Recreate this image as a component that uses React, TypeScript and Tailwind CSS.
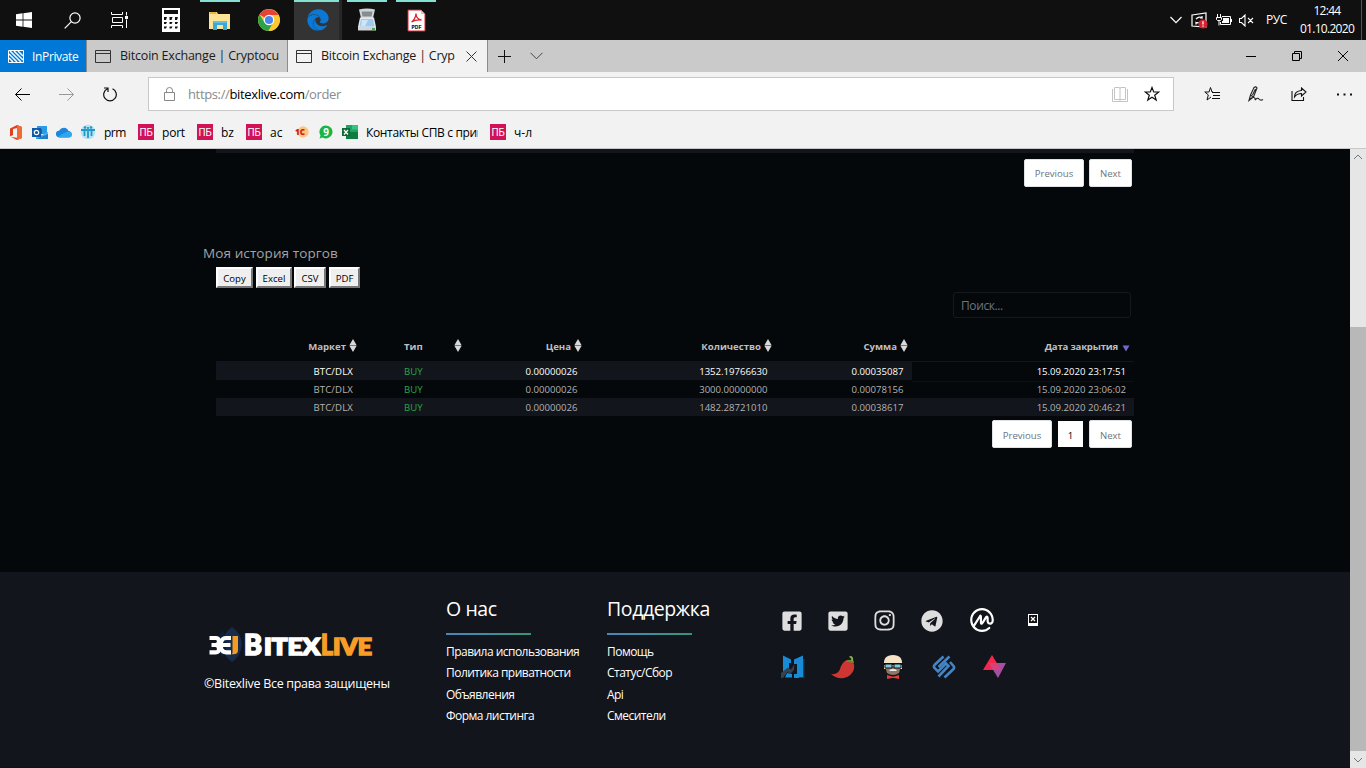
import React from 'react';
import { FaEdge, FaFacebookSquare, FaInstagram, FaTelegram, FaTwitterSquare } from 'react-icons/fa';
import { SiCoinmarketcap } from 'react-icons/si';

const ui = "font-['Open_Sans','Noto_Sans',sans-serif]";

function WindowsIcon() {
  return (
    <svg width="16" height="16" viewBox="0 0 16 16" fill="#fff">
      <path d="M0 2.2 6.6 1.3V7.6H0zM7.4 1.2 16 0V7.6H7.4zM0 8.4H6.6V14.7L0 13.8zM7.4 8.4H16V16L7.4 14.8z" />
    </svg>
  );
}

function SearchIcon() {
  return (
    <svg width="17" height="17" viewBox="0 0 17 17" fill="none" stroke="#fff" strokeWidth="1.2">
      <circle cx="11" cy="6" r="5.1" />
      <path d="M7.4 9.6 .7 16.3" />
    </svg>
  );
}

function TaskViewIcon() {
  return (
    <svg width="18" height="16" viewBox="0 0 18 16" fill="none" stroke="#fff" strokeWidth="1">
      <path d="M.5 0V2.5H11.5V0M.5 16V13.5H11.5V16M1.5 5.5H11.5V10.5H1.5zM15.5 0V3.5M15.5 7.5V16" />
      <path d="M14 4h3v3h-3z" fill="#fff" stroke="none" />
    </svg>
  );
}

function CalcIcon() {
  return (
    <svg width="18" height="24" viewBox="0 0 18 24">
      <path d="M0 0h18v24H0z" fill="#fff" />
      <path
        d="M2 2h14v4H2zM2 9h3l-1 3H2zM7.5 9h3l-1 3h-2zM13 9h3l-1 3h-2zM2 14h3l-1 2H2zM7.5 14h3l-1 2h-2zM13 14h3l-1 2h-2zM2 18.5h3l-1 2H2zM7.5 18.5h3l-1 2h-2zM13 18.5h3l-1 2h-2z"
        fill="#111"
      />
    </svg>
  );
}

function FolderIcon() {
  return (
    <svg width="22" height="19" viewBox="0 0 22 19">
      <path d="M0 1h8l1 2h12v14H0z" fill="#f5cf62" />
      <path d="M1 1h6v2H1z" fill="#e9b53c" />
      <path d="M0 3h21v15H0z" fill="#fde395" />
      <path d="M4 19V11q0-1 1-1h12q1 0 1 1v8h-4v-5H8v5z" fill="#3ba7d6" />
      <path d="M5 10h12v2H5z" fill="#62c0e6" />
    </svg>
  );
}

function ChromeIcon() {
  return (
    <svg width="22" height="22" viewBox="0 0 22 22">
      <circle cx="11" cy="11" r="11" fill="#fcc934" />
      <path d="M11 11 1.5 5.5A11 11 0 0 1 20.5 6H11z" fill="#e54335" />
      <path d="M1.5 5.5A11 11 0 0 0 10.5 22L15.3 13.5 11 11 6.5 13.4z" fill="#2ba24c" />
      <path d="M11 6h9.5A11 11 0 0 1 10.5 22l4.8-8.5z" fill="#fcc934" />
      <circle cx="11" cy="11" r="5.2" fill="#fff" />
      <circle cx="11" cy="11" r="4.1" fill="#4a84ee" />
    </svg>
  );
}

function ScannerIcon() {
  return (
    <svg width="20" height="24" viewBox="0 0 20 24">
      <path d="M2 1.500q8-2 16 0l-2 8.500H4z" fill="#d2d5d7" />
      <path d="M4.500 3.500h11L14.500 8.500h-9z" fill="#858d91" />
      <path d="M3 9.500h14l2 9.500H1z" fill="#e2e9ee" />
      <path d="M4 11h12l1.500 7.500h-15z" fill="#9fcaee" />
      <path d="M5 12h6l-3 6H4z" fill="#cfe5f7" />
      <path d="M1 19h18v3.500H1z" fill="#d3d6d8" />
      <path d="M15 20h3v2h-3z" fill="#3fae49" />
    </svg>
  );
}

function PdfIcon() {
  return (
    <svg width="19" height="23" viewBox="0 0 19 23">
      <path d="M1 1h13l4 4v17H1z" fill="#fff" stroke="#d8232a" />
      <path d="M14 1v4h4z" fill="#f6b7b7" />
      <path d="M4.500 13c2-1 4.500-5 4.500-8.500 0 4 2 6 5.500 6.500C10.500 10.500 7 11.500 4.500 13z" fill="none" stroke="#d8232a" strokeWidth="1.300" />
      <text x="9.500" y="19.500" fontSize="5" fontWeight="800" textAnchor="middle" fill="#222" fontFamily="Inter">PDF</text>
    </svg>
  );
}

function Tray() {
  return (
    <>
      <svg className="mr-[9px]" width="12" height="8" viewBox="0 0 12 8" fill="none" stroke="#fff" strokeWidth="1.2">
        <path d="M.5 1 6 6.700 11.500 1" />
      </svg>
      <svg className="mr-[8px]" width="17" height="17" viewBox="0 0 17 17" fill="none" stroke="#fff" strokeWidth="1.200">
        <path d="M1 3 15 1V15L1 14z" />
        <path d="M5 7q3-3 6-1v-2M11 6H9M10 9q-2 3-5 1.500V12.500M5 10.500h2" />
        <circle cx="12" cy="12" r="4.600" fill="#d5222e" stroke="none" />
        <path d="M12 9.300v3.200M12 13.600v1.200" strokeWidth="1.300" />
      </svg>
      <svg className="mr-[7px]" width="16" height="13" viewBox="0 0 16 13" fill="none" stroke="#fff">
        <path d="M1.500 0v3M4.500 0v3M.5 3.500h5v2l-1 1h-3l-1-1zM3 7v4.500" />
        <path d="M6 2.500h8.500v8H4.500V8" />
        <path d="M7 4h6v5H6V7h1zM14.500 5h1.500v3h-1.500z" fill="#fff" stroke="none" />
      </svg>
      <svg className="mr-[12px]" width="15" height="13" viewBox="0 0 15 13" fill="none" stroke="#fff" strokeWidth="1.100">
        <path d="M.5 4.500h2L6 1v11L2.500 8.500h-2zM9 4l5 5M14 4 9 9" />
      </svg>
    </>
  );
}

function Cell({ children, open = false, active = false }: { children: React.ReactNode; open?: boolean; active?: boolean }) {
  return (
    <div className={'mr-px flex h-10 w-12 flex-col items-center ' + (active ? 'border-r-[3px] border-r-[#272727] bg-[#333]' : '')}>
      <div className={'h-[2px] shrink-0 ' + (open ? (active ? 'w-full bg-[#85e0d2]' : 'w-10 bg-[#85e0d2]') : 'w-10')} />
      <div className={'flex h-9 items-center justify-center ' + (active ? 'pl-[3px]' : '')}>{children}</div>
    </div>
  );
}

function Taskbar() {
  return (
    <header className="flex h-10 shrink-0 items-center bg-[#101010]">
      <div className="flex w-12 justify-center"><WindowsIcon /></div>
      <div className="flex w-12 justify-center"><SearchIcon /></div>
      <div className="mr-[3px] flex w-12 justify-center"><TaskViewIcon /></div>
      <Cell><CalcIcon /></Cell>
      <Cell open><FolderIcon /></Cell>
      <Cell><ChromeIcon /></Cell>
      <Cell open active><FaEdge size={22} color="#0c78d4" /></Cell>
      <Cell open><ScannerIcon /></Cell>
      <Cell open><PdfIcon /></Cell>
      <div className="ml-auto flex items-center">
        <Tray />
        <span className="w-[22px] text-[12px] tracking-[-0.4px] text-white">РУС</span>
      </div>
      <div className="ml-[6px] flex w-[66px] flex-col items-center text-[12px] leading-[18px] text-white">
        <span className="tracking-[-0.7px]">12:44</span>
        <span className="tracking-[-0.7px]">01.10.2020</span>
      </div>
      <div className="ml-px h-10 w-[5px] border-l border-[#555]" />
    </header>
  );
}

function PageIcon() {
  return (
    <svg className="shrink-0" width="16" height="13" viewBox="0 0 16 13" fill="none" stroke="#333">
      <path d="M.5.5h15v12H.5zM.5 3.500h15" />
    </svg>
  );
}

function TabStrip() {
  return (
    <div className="flex h-8 shrink-0 items-center bg-[#cacaca] text-[12.500px] text-[#1a1a1a]">
      <div className="flex h-8 w-[86px] items-center bg-[#0078d7] pl-2 text-[12px] text-white">
        <svg width="16" height="13" viewBox="0 0 16 13" fill="none" stroke="#fff">
          <path d="M.5.5h15v12H.5z" />
          <path d="M1 4l8 8M1 8l4 4M2 1l11 11M6 1l9 9M10 1l5 5" strokeWidth="1.500" />
        </svg>
        <span className="mt-[2px] ml-2 tracking-[-0.35px]">InPrivate</span>
      </div>
      <div className="flex h-8 w-[202px] items-center border-x border-[#8b8b8b] pl-2">
        <PageIcon />
        <span className="ml-[9px] w-[162px] overflow-hidden whitespace-nowrap tracking-[-0.21px]">Bitcoin Exchange | Cryptocu</span>
      </div>
      <div className="flex h-8 w-[200px] items-center border-r border-[#8b8b8b] bg-[#f2f2f2] pl-2">
        <PageIcon />
        <span className="ml-[9px] w-[145px] overflow-hidden whitespace-nowrap tracking-[-0.23px]">Bitcoin Exchange | Cryp</span>
        <svg width="11" height="11" viewBox="0 0 11 11" stroke="#333">
          <path d="M.5.5l10 10M10.500.5l-10 10" />
        </svg>
      </div>
      <svg className="ml-[10px]" width="13" height="13" viewBox="0 0 13 13" stroke="#111">
        <path d="M6.500 0v13M0 6.500h13" />
      </svg>
      <svg className="ml-[19px]" width="13" height="8" viewBox="0 0 13 8" fill="none" stroke="#444">
        <path d="M.5.8l6 6 6-6" />
      </svg>
      <svg className="ml-auto" width="10" height="10" viewBox="0 0 10 10" stroke="#000"><path d="M0 5.500h10" /></svg>
      <svg className="ml-9" width="10" height="10" viewBox="0 0 10 10" fill="none" stroke="#000">
        <path d="M.5 2.500h7v7h-7zM2.500 2.500v-2h7v7h-2" />
      </svg>
      <svg className="mr-[18px] ml-9" width="10" height="10" viewBox="0 0 10 10" stroke="#000"><path d="M0 0l10 10M10 0 0 10" /></svg>
    </div>
  );
}

function AddressBar() {
  return (
    <div className="flex h-11 shrink-0 items-center bg-[#f2f2f2]">
      <svg className="ml-[15px]" width="15" height="13" viewBox="0 0 15 13" fill="none" stroke="#000"><path d="M15 6.500H.7M6.500.5l-6 6 6 6" /></svg>
      <svg className="ml-[29px]" width="15" height="13" viewBox="0 0 15 13" fill="none" stroke="#999"><path d="M0 6.500h14.300M8.500.5l6 6-6 6" /></svg>
      <svg className="ml-[29px]" width="14" height="15" viewBox="0 0 14 15" fill="none" stroke="#111" strokeWidth="1.200">
        <path d="M4.500 1.800A6.300 6.300 0 1 0 9.500 1.800M1 1h4v4" />
      </svg>
      <div className="ml-[31px] flex h-[34px] w-[1026px] items-center border border-[#c8c8c8] bg-white">
        <svg className="ml-[15px]" width="11" height="14" viewBox="0 0 11 14" fill="none" stroke="#888">
          <path d="M.5 5.500h10v8H.5zM2.500 5.500V3.300a3 2.800 0 0 1 6 0v2.200" />
        </svg>
        <span className="mt-px ml-[13px] text-[13px] tracking-[-0.36px] whitespace-nowrap text-[#8a8a8a]">
          https://<span className="text-black">bitexlive.com</span>/order
        </span>
        <svg className="ml-auto" width="16" height="15" viewBox="0 0 16 15" fill="none" stroke="#c4c4c4">
          <path d="M2.500.5h5l.5 1 .5-1h5v12h-5l-.5 1-.5-1h-5zM8 1v12M.5 2v12.500h15V2" />
        </svg>
        <svg className="mr-[13px] ml-4" width="16" height="16" viewBox="0 0 16 16" fill="none" stroke="#111" strokeWidth="1.200">
          <path d="M8 1.500 9.700 6h5L10.700 9.200 12.200 14 8 11.200 3.800 14 5.300 9.200 1.300 6h5z" />
        </svg>
      </div>
      <svg className="ml-[30px]" width="17" height="16" viewBox="0 0 17 16" fill="none" stroke="#111">
        <path d="M9 6H8L6.500 1.500 5 6H.8L4.300 8.900 3 14l4-3M8 6.500h8M9 9.500h7M8 12.500h8" />
      </svg>
      <svg className="ml-[27px]" width="16" height="16" viewBox="0 0 16 16" fill="none" stroke="#222" strokeWidth="1.100">
        <path d="M1 14.500 2.500 9 6 1.500q2-1.500 3 .5L5.500 11zM2.500 9 5.500 11M4.500 9 7.500 3M1 14.500C5 9 8 12 7 14q3-3 4-1 1.500 2 4 .5" />
      </svg>
      <svg className="ml-[27px]" width="17" height="15" viewBox="0 0 17 15" fill="none" stroke="#111" strokeWidth="1.100">
        <path d="M1 4v9.500h11.500V10M3.500 10q0-6 7-6.500V1l4.500 4-4.500 4V6.500Q6 6.500 3.500 10z" />
      </svg>
      <svg className="ml-[29px]" width="15" height="3" viewBox="0 0 15 3" fill="#111"><path d="M0 .5h2v2H0zM6.500.5h2v2h-2zM13 .5h2v2h-2z" /></svg>
    </div>
  );
}

function Pb({ label, className }: { label: string; className: string }) {
  return (
    <div className={'flex items-center ' + className}>
      <span className="flex size-4 items-center justify-center bg-[#d01257] pt-px font-['Roboto',sans-serif] text-[10px] leading-none tracking-[-0.2px] text-white">ПБ</span>
      <span className="mt-[2px] ml-2">{label}</span>
    </div>
  );
}

function Favorites() {
  return (
    <div className="flex h-[33px] shrink-0 items-center border-b border-[#c8c8c8] bg-[#f2f2f2] text-[12px] whitespace-nowrap text-black">
      <svg className="ml-[9px]" width="13" height="15" viewBox="0 0 13 15">
        <path d="M1 3.500 8 0l5 2v11l-5 2-6-3 6 .7V3L4 4v6l-3 1.500z" fill="#e0401c" />
        <path d="M8 0l5 2v11l-5 2z" fill="#f06a35" />
      </svg>
      <svg className="ml-[10px]" width="16" height="15" viewBox="0 0 16 15">
        <path d="M5 1h10v8H5z" fill="#2a9be6" />
        <path d="M5 4h5v5H5z" fill="#1066b5" />
        <path d="M4 7l6 3 6-3v7H4z" fill="#49b6f2" />
        <path d="M4 14l12-5v5z" fill="#1b7fd0" />
        <path d="M0 3h9v9H0z" fill="#0f5ba7" />
        <circle cx="4.500" cy="7.500" r="2.200" fill="none" stroke="#fff" strokeWidth="1.200" />
      </svg>
      <svg className="ml-[8px]" width="16" height="11" viewBox="0 0 16 11">
        <path d="M3.500 10.500a3.500 3.500 0 0 1-.2-7A5 5 0 0 1 12.500 4a3.300 3.300 0 0 1 .2 6.500z" fill="#1a86dc" />
        <path d="M2 10q6-5 11-5.500a3 3 0 0 1 0 6H3.500z" fill="#31a6ef" />
      </svg>
      <svg className="ml-2" width="16" height="16" viewBox="0 0 16 16">
        <circle cx="8" cy="8" r="7.300" fill="#b4e3f3" />
        <path d="M1 6h6M9 6h6M8 3v11M4.500 7v5M11.500 7v5" stroke="#2399c8" strokeWidth="1.800" />
        <circle cx="5" cy="3.500" r="1.300" fill="#2399c8" />
        <circle cx="11" cy="3.500" r="1.300" fill="#2399c8" />
      </svg>
      <span className="mt-[2px] ml-2 w-[24px] tracking-[-0.5px]">prm</span>
      <Pb label="port" className="ml-[10px] w-[49px] tracking-[-0.2px]" />
      <Pb label="bz" className="ml-[10px] w-[39px]" />
      <Pb label="ac" className="ml-[10px] w-[39px]" />
      <svg className="ml-[10px]" width="14" height="14" viewBox="0 0 14 14">
        <circle cx="8" cy="7" r="5.700" fill="#fbc77e" />
        <text x="0" y="10" fontSize="8" fontWeight="800" fill="#cb2019" fontFamily="Open Sans">1С</text>
      </svg>
      <svg className="ml-[10px]" width="14" height="14" viewBox="0 0 14 14">
        <path d="M7 .5a6.500 6.500 0 1 1-3.500 12L.5 13.500 1.500 10.500A6.500 6.500 0 0 1 7 .5z" fill="#17b544" />
        <text x="7" y="10.500" fontSize="10" fontWeight="700" textAnchor="middle" fill="#fff" fontFamily="Open Sans">9</text>
      </svg>
      <svg className="ml-[9px]" width="16" height="14" viewBox="0 0 16 14">
        <path d="M4 0h12v14H4z" fill="#21a366" />
        <path d="M10 0h6v4.500h-6z" fill="#33c481" />
        <path d="M4 7h12v7H4z" fill="#107c41" />
        <path d="M0 3h8v8H0z" fill="#0e6b37" />
        <path d="M2 5l4 4.500M6 5 2 9.500" stroke="#fff" strokeWidth="1.300" />
      </svg>
      <span className="mt-[2px] ml-2 w-[112px] overflow-hidden tracking-[-0.35px]">Контакты СПВ с прив</span>
      <Pb label="ч-л" className="ml-[12px]" />
    </div>
  );
}

function Sorter() {
  return (
    <svg width="8" height="13" viewBox="0 0 8 13" fill="#d8d8d8">
      <path d="M4 0 7.500 6H.5zM4 13 .5 7h7z" />
      <path d="M.5 6h7v1h-7z" fill="#777" />
    </svg>
  );
}

const cols = 'grid grid-cols-[145px_105px_120px_190px_136px_222px]';

const trades = [
  ['0.00000026', '1352.19766630', '0.00035087', '15.09.2020 23:17:51'],
  ['0.00000026', '3000.00000000', '0.00078156', '15.09.2020 23:06:02'],
  ['0.00000026', '1482.28721010', '0.00038617', '15.09.2020 20:46:21'],
];

function Head({ label }: { label: string }) {
  return (
    <div className="flex items-center justify-end gap-[3px] pr-1">
      <span>{label}</span>
      <span className="-mt-[3px]"><Sorter /></span>
    </div>
  );
}

function Trades() {
  return (
    <div className="ml-[216px] w-[918px] text-[9.600px]">
      <div className={cols + ' h-[32px] border-b border-[#12151a] pt-[3px] font-bold text-[#bfbfbf]'}>
        <Head label="Маркет" />
        <div className="flex items-center justify-between pr-1 pl-[43px]">
          <span>Тип</span>
          <span className="-mt-[3px]"><Sorter /></span>
        </div>
        <Head label="Цена" />
        <Head label="Количество" />
        <Head label="Сумма" />
        <div className="flex items-center justify-end gap-1 pr-[4px]">
          <span className="tracking-[-0.2px]">Дата закрытия</span>
          <svg className="mt-[2px]" width="8" height="7" viewBox="0 0 8 6" fill="#7468c9"><path d="M.5 0h7L4 6z" /></svg>
        </div>
      </div>
      {trades.map((row, i) => (
        <div
          key={row[1]}
          className={cols + ' h-[18px] text-right leading-[19px] ' + (i === 0 ? 'text-white' : 'text-[#b2b2b2]') + (i === 1 ? '' : ' bg-[#12151b]')}
        >
          <span className="pr-2 tracking-[0.15px]">BTC/DLX</span>
          <span className="pl-[43px] text-left text-[#28a745]">BUY</span>
          <span className="pr-[8.500px]">{row[0]}</span>
          <span className="pr-[8.500px]">{row[1]}</span>
          <span className="pr-[8.500px]">{row[2]}</span>
          <span className={'pr-2 ' + (i === 0 ? 'border-b border-[#0c1014] bg-[#04080b]' : '')}>{row[3]}</span>
        </div>
      ))}
    </div>
  );
}

function PageButton({ label, className }: { label: string; className: string }) {
  return (
    <button className={'h-7 rounded-[2px] border border-[#dee2e6] bg-white text-[9.600px] text-[#6c757d] ' + className}>{label}</button>
  );
}

function ExportButton({ label, className }: { label: string; className: string }) {
  return (
    <button
      className={'h-[21px] border-2 border-t-white border-r-[#777] border-b-[#777] border-l-white bg-[#efefef] pt-[2px] text-[9.600px] leading-[15px] text-black ' + className}
    >
      {label}
    </button>
  );
}

function LinkColumn({ title, links, className }: { title: string; links: string[]; className: string }) {
  return (
    <div className={className}>
      <h3 className="mt-[23px] h-[29px] text-[19.500px] leading-[27px] tracking-[-0.4px] whitespace-nowrap">{title}</h3>
      <div className="mt-[9px] mb-[6px] h-[2px] w-[85px] bg-linear-to-r from-[#4a86bd] to-[#369477]" />
      <ul className="text-[12px] leading-[21.400px] tracking-[-0.53px] whitespace-nowrap">
        {links.map((l) => (
          <li key={l}>{l}</li>
        ))}
      </ul>
    </div>
  );
}

function Logo() {
  return (
    <svg width="166" height="36" viewBox="0 0 166 36">
      <path d="M23 0q9 6 10 17-1 12-10 18-9-6-10-18Q14 6 23 0z" fill="#192b4b" />
      <path d="M14 3q-12 13 0 28 7-14 0-28z" fill="#0d1e3a" />
      <g fill="none" stroke="#fff" strokeWidth="4.200">
        <path d="M.5 11h6q3.500 0 3.500 3.500T6.500 18H2.500M6.500 18q3.500 0 3.500 3.700T6.500 25.300H.5" />
        <path d="M22 11h-4.500Q13 11 12 15v6q1 4.300 5.500 4.300H22M10 18h11.500" />
      </g>
      <path d="M23.500 9h5.500v14q0 4.300-4.500 4.300h-2q1.500-1 1-4z" fill="#f49b23" />
      <g fontFamily="Lato, Inter, sans-serif" fontWeight="900" strokeWidth="1.700">
        <text x="35" y="28" fontSize="28" fill="#fff" stroke="#fff" textLength="18" lengthAdjust="spacingAndGlyphs">B</text>
        <text x="55" y="28" fontSize="23.500" fill="#fff" stroke="#fff" textLength="56" lengthAdjust="spacingAndGlyphs">ITEX</text>
        <text x="112" y="28" fontSize="28" fill="#f99d27" stroke="#f99d27" textLength="12" lengthAdjust="spacingAndGlyphs">L</text>
        <text x="124" y="28" fontSize="23.500" fill="#f99d27" stroke="#f99d27" textLength="39" lengthAdjust="spacingAndGlyphs">IVE</text>
      </g>
    </svg>
  );
}

function Partners() {
  return (
    <div className="mt-[22px] flex h-6 items-center">
      <svg width="24" height="24" viewBox="0 0 24 24">
        <path d="M2 .5 10 4.500V8H8v7l-6 4zM13 4.500 22 .5V23h-9v-4h3V9h-3zM6 18l5 1v3.500H4z" fill="#168bd6" />
        <path d="M0 23V18L7 12.500l3 2L13.500 9l-.5 6-4 4-2.500-2L2 23z" fill="#34424f" />
        <path d="M22 4h1.500v19H18v-1h4z" fill="#26384b" />
      </svg>
      <svg className="ml-[26px]" width="24" height="24" viewBox="0 0 24 24">
        <path d="M20 5q4 3 3 9-2 7-10 9Q5 24 0 19q7 1 9-5 2-7 7-9z" fill="#ce3731" />
        <path d="M15 7q1-3 4-2 4-1 4 3-2-1-3 0-2-2-5-1z" fill="#648b35" />
        <path d="M20 6q1-3-2-4l1-1q4 0 3 5z" fill="#86ad48" />
      </svg>
      <svg className="ml-[26px]" width="24" height="24" viewBox="0 0 24 24">
        <path d="M3 10Q2 0 12 0t9 10v4H3z" fill="#f5e2c7" />
        <path d="M4 11h16l-2 7q-6 4-12 0z" fill="#8c7666" />
        <path d="M2 8h20v2H2z" fill="#111" />
        <path d="M4 9h7v4H4zM13 9h7v4h-7z" fill="#78cbe0" stroke="#111" strokeWidth="1" />
        <path d="M8 15q4-2 8 0l-1 1H9z" fill="#eee" />
        <path d="M6 20l5 1.500h2l5-1.500v4l-5-1h-2l-5 1z" fill="#e33b37" />
      </svg>
      <svg className="ml-[27px]" width="24" height="24" viewBox="0 0 24 24" fill="none" stroke="#4384c4" strokeWidth="2.600">
        <path d="M11.500 1.500 2.500 10Q1.300 11.500 2.500 13L6 16.500 14 8.500 16.500 11 6.500 21.500M17.500 1.500 6.500 12M12.500 22.500 21.500 14Q22.700 12.500 21.500 11L18 7" />
      </svg>
      <svg className="ml-[27px]" width="24" height="24" viewBox="0 0 24 24">
        <path d="M9 0l9 15L0 15z" fill="#f5274f" />
        <path d="M6 8h17l-8 15z" fill="#a44fa1" />
        <path d="M6 8h8l4 7h-8z" fill="#d74378" />
      </svg>
    </div>
  );
}

function Footer() {
  return (
    <footer className="flex h-[196px] shrink-0 border-b border-[#190a20] bg-[#12151b] pl-[204px] text-white">
      <div className="w-[242px] pt-[55px]">
        <div className="ml-[5px]"><Logo /></div>
        <p className="mt-[9px] text-[12.500px] leading-[24px] tracking-[-0.3px] whitespace-nowrap">©Bitexlive Все права защищены</p>
      </div>
      <LinkColumn className="w-[161px]" title="О нас" links={['Правила использования', 'Политика приватности', 'Объявления', 'Форма листинга']} />
      <LinkColumn className="w-[174px]" title="Поддержка" links={['Помощь', 'Статус/Сбор', 'Api', 'Смесители']} />
      <div className="pt-9">
        <div className="flex h-[25px] items-center text-[#dedede]">
          <FaFacebookSquare size={22} />
          <FaTwitterSquare size={22} className="ml-6" />
          <FaInstagram size={23} className="ml-6" />
          <FaTelegram size={22} className="ml-[25px]" />
          <SiCoinmarketcap size={24} color="#fff" className="-mt-[2px] ml-[27px]" />
          <svg className="-mt-[2px] ml-[34px]" width="10" height="12" viewBox="0 0 10 12">
            <path d="M0 0h10v12H0z" fill="#fff" />
            <path d="M1 1h8v8H1z" fill="#111" />
            <path d="M3 3l4 4M7 3 3 7" stroke="#fff" strokeWidth="1.200" />
          </svg>
        </div>
        <Partners />
      </div>
    </footer>
  );
}

function Scrollbar() {
  return (
    <div className="flex w-4 flex-col items-center bg-[#e6e6e6]">
      <div className="flex h-[178px] pt-[5px]">
        <svg width="8" height="6" viewBox="0 0 8 6" fill="none" stroke="#777"><path d="M0 5l4-4 4 4" /></svg>
      </div>
      <div className="h-[424px] w-4 bg-[#b8b8b8]" />
      <svg className="mt-[7px]" width="8" height="6" viewBox="0 0 8 6" fill="none" stroke="#777"><path d="M0 0l4 4 4-4" /></svg>
    </div>
  );
}

export default function App() {
  return (
    <div className={'flex h-[768px] w-[1366px] flex-col overflow-hidden ' + ui}>
      <Taskbar />
      <TabStrip />
      <AddressBar />
      <Favorites />
      <div className="flex h-[619px]">
        <main className="flex w-[1350px] flex-col bg-[#04080b]">
          <div className="ml-[216px] h-1 w-[918px] bg-[#12151b]" />
          <div className="mt-[6px] mr-[218px] flex justify-end gap-[5px]">
            <PageButton label="Previous" className="w-[60px] pt-[2px]" />
            <PageButton label="Next" className="w-[43px] pt-[2px]" />
          </div>
          <h2 className="mt-[56px] ml-[203px] h-[21px] text-[13.500px] leading-[21px] tracking-[0.1px] text-[#a3a3a3]">Моя история торгов</h2>
          <div className="mt-[3px] ml-[216px] flex">
            <ExportButton label="Copy" className="w-[37px]" />
            <ExportButton label="Excel" className="ml-[3px] w-[36px]" />
            <ExportButton label="CSV" className="ml-[2px] w-[32px]" />
            <ExportButton label="PDF" className="ml-[3px] w-[31px]" />
          </div>
          <input
            placeholder="Поиск..."
            className="mt-1 ml-[953px] h-[26px] w-[178px] rounded-[3px] border border-[#15191e] bg-transparent px-[7px] text-[12px] tracking-[-0.4px] placeholder:text-[#6c757d]"
          />
          <div className="h-[12px]" />
          <Trades />
          <div className="mt-[4px] mr-[218px] flex items-center justify-end gap-[6px]">
            <PageButton label="Previous" className="w-[60px] pt-[4px]" />
            <button className="h-[26px] w-[25px] bg-white pt-[4px] text-[9.600px] text-black">1</button>
            <PageButton label="Next" className="w-[43px] pt-[4px]" />
          </div>
          <div className="flex-1" />
          <Footer />
        </main>
        <Scrollbar />
      </div>
    </div>
  );
}
